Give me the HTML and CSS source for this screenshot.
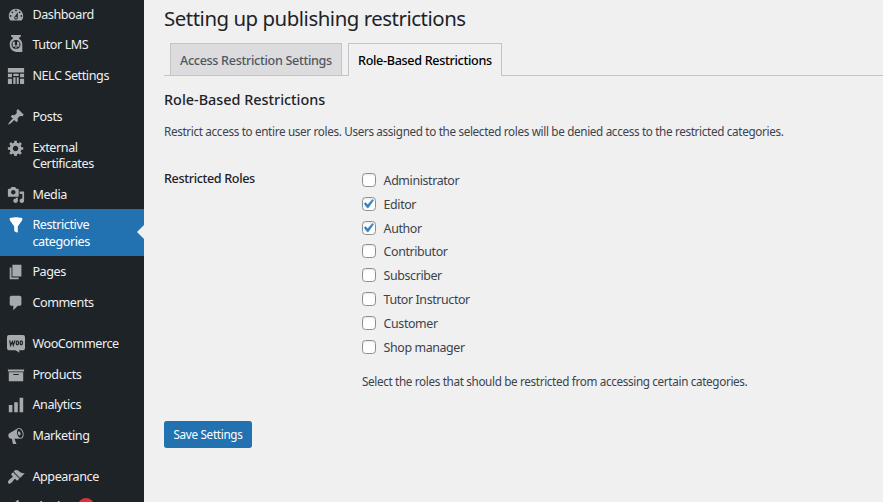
FILE: index.html
```
<!DOCTYPE html>
<html lang="en">
<head>
<meta charset="utf-8">
<title>Setting up publishing restrictions</title>
<link rel="stylesheet" href="styles.css">
</head>
<body>
<nav class="sidebar">
  <ul class="menu">
    <li class="item"><svg viewBox="0 0 20 20"><path d="M3.76 16h12.48c1.1-1.37 1.76-3.11 1.76-5 0-4.42-3.58-8-8-8s-8 3.58-8 8c0 1.89.66 3.63 1.76 5zM10 4c.55 0 1 .45 1 1s-.45 1-1 1-1-.45-1-1 .45-1 1-1zM6 6c.55 0 1 .45 1 1s-.45 1-1 1-1-.45-1-1 .45-1 1-1zm8 0c.55 0 1 .45 1 1s-.45 1-1 1-1-.45-1-1 .45-1 1-1zm-5.37 5.55L12 7v6c0 1.1-.9 2-2 2s-2-.9-2-2c0-.57.24-1.08.63-1.45zM4 10c.55 0 1 .45 1 1s-.45 1-1 1-1-.45-1-1 .45-1 1-1zm12 0c.55 0 1 .45 1 1s-.45 1-1 1-1-.45-1-1 .45-1 1-1zm-5 3c0-.55-.45-1-1-1s-1 .45-1 1 .45 1 1 1 1-.45 1-1z"/></svg><span>Dashboard</span></li>
    <li class="item"><svg class="raised" viewBox="0 0 20 20"><path d="M4.500 0h11v1.500L13.500 3v2h-7V3l-2-1.500z"/><path fill-rule="evenodd" d="M10 3.500c4.500 0 7 3 7 7V19h-4.500C6.500 19 3 15.500 3 10.500s3-7 7-7zm0 2a5 5 0 1 0 0 10 5 5 0 0 0 0-10z"/><path d="M6.300 7.500h2.500v5.500H6.300zM11.200 7.500h2.500v5.500h-2.500zM9.300 11h1.400v4H9.300z"/></svg><span>Tutor LMS</span></li>
    <li class="item"><svg viewBox="0 0 20 20"><path d="M1 1h18v5H1zM1 7.500h4.500v4H1zM1 13h4.500v6H1zM7 7.500h6v2.500H7zM7 11.500h2.500V19H7zM10.800 11.500H13V19h-2.200zM14.500 7.500H19v4h-4.500zM14.500 13H19v6h-4.500z"/></svg><span>NELC Settings</span></li>
    <li class="separator"></li>
    <li class="item"><svg viewBox="0 0 20 20"><path d="M10.44 3.02l1.82-1.82 6.36 6.35-1.83 1.82c-1.05-.68-2.48-.57-3.41.36l-.75.75c-.92.93-1.04 2.35-.35 3.41l-1.83 1.82-2.41-2.41-2.8 2.79c-.42.42-3.38 2.71-3.8 2.29s1.86-3.39 2.28-3.81l2.79-2.79L4.1 9.36l1.83-1.82c1.05.69 2.48.57 3.4-.36l.75-.75c.93-.92 1.05-2.35.36-3.41z"/></svg><span>Posts</span></li>
    <li class="item"><svg viewBox="0 0 20 20"><path d="M18 12h-2.180c-.17.7-.44 1.350-.81 1.930l1.540 1.540-2.100 2.100-1.540-1.540c-.58.36-1.230.63-1.910.79V19H8v-2.180c-.68-.16-1.330-.43-1.910-.79l-1.540 1.540-2.120-2.120 1.540-1.540c-.36-.58-.63-1.230-.79-1.910H1V9.030h2.170c.16-.7.44-1.350.8-1.940L2.430 5.550l2.100-2.100 1.540 1.540c.58-.37 1.240-.64 1.930-.81V2h3v2.180c.68.16 1.330.43 1.910.79l1.540-1.540 2.120 2.120-1.540 1.540c.36.59.64 1.240.8 1.940H18V12zm-8.500 1.500c1.660 0 3-1.340 3-3s-1.340-3-3-3-3 1.340-3 3 1.340 3 3 3z"/></svg><span>External<br>Certificates</span></li>
    <li class="item"><svg viewBox="0 0 20 20"><path d="M13 11V4c0-.55-.45-1-1-1h-1.670L9 1H5L3.670 3H2c-.55 0-1 .45-1 1v7c0 .55.45 1 1 1h10c.55 0 1-.45 1-1zM7 4.500c1.380 0 2.500 1.120 2.500 2.500S8.380 9.500 7 9.500 4.500 8.380 4.500 7 5.620 4.500 7 4.500zM14 6h5v10.500c0 1.380-1.120 2.500-2.500 2.500S14 17.880 14 16.500s1.120-2.500 2.500-2.500c.17 0 .34.02.5.05V9h-3V6zm-4 8.050V13h2v3.500c0 1.380-1.120 2.500-2.500 2.500S7 17.880 7 16.500 8.120 14 9.500 14c.17 0 .34.02.5.05z"/></svg><span>Media</span></li>
    <li class="item current"><svg viewBox="0 0 20 20"><path d="M3 4.500v-2s3.340-1 7-1 7 1 7 1v2l-5 7.030v6.970s-1.220-.09-2.250-.59S8 16.500 8 16.500v-4.970z"/></svg><span>Restrictive<br>categories</span></li>
    <li class="item"><svg viewBox="0 0 20 20"><path d="M6 15V2h10v13H6zm-1 1h8v2H3V5h2v11z"/></svg><span>Pages</span></li>
    <li class="item"><svg viewBox="0 0 20 20"><path d="M5 2h9c1.100 0 2 .9 2 2v7c0 1.100-.9 2-2 2h-2l-5 5v-5H5c-1.100 0-2-.9-2-2V4c0-1.100.9-2 2-2z"/></svg><span>Comments</span></li>
    <li class="separator"></li>
    <li class="item"><svg viewBox="0 0 20 20"><path d="M2.200 0h15.600A2.200 2.200 0 0 1 20 2.200v12.600a2.200 2.200 0 0 1-2.200 2.200h-4.300l.3 2.800L9.500 17H2.200A2.200 2.200 0 0 1 0 14.800V2.200A2.200 2.200 0 0 1 2.200 0z"/><path class="ink" d="M3 6l1 5.500 2-4 1 4L8.800 6"/><ellipse class="ink" cx="11.500" cy="8.700" rx="1.300" ry="2.200"/><ellipse class="ink" cx="15.800" cy="8.700" rx="1.300" ry="2.200"/></svg><span>WooCommerce</span></li>
    <li class="item"><svg viewBox="0 0 20 20"><path d="M19 4v2H1V4h18zM2 7h16v10H2V7zm11 3V9H7v1h6z"/></svg><span>Products</span></li>
    <li class="item"><svg viewBox="0 0 20 20"><path d="M18 18V2h-4v16h4zm-6 0V7H8v11h4zm-6 0v-8H2v8h4z"/></svg><span>Analytics</span></li>
    <li class="item"><svg viewBox="0 0 20 20"><path d="M18.150 5.940c.46 1.620.38 3.220-.02 4.480-.42 1.280-1.260 2.180-2.300 2.480-.16.06-.26.06-.4.06-.06.02-.12.02-.18.02-.06.02-.14.02-.22.02h-6.800l2.220 5.500c.02.14-.06.26-.14.34-.08.1-.24.16-.34.16H6.950c-.1 0-.26-.06-.34-.16-.08-.08-.16-.2-.14-.34l-1-5.500H4.250l-.02-.02c-.5.06-1.080-.18-1.540-.62s-.88-1.080-1.060-1.880c-.24-.8-.2-1.560-.02-2.200.18-.62.58-1.080 1.060-1.300l.02-.02 9-5.400c.1-.06.18-.1.24-.16.06-.04.14-.08.24-.12.16-.08.28-.12.5-.18 1.040-.3 2.240.1 3.220.98s1.840 2.240 2.260 3.860zm-2.580 5.980h-.02c.4-.1.74-.34 1.040-.7.58-.7.86-1.760.86-3.040 0-.64-.1-1.300-.28-1.980-.34-1.360-1.020-2.500-1.780-3.240s-1.680-1.100-2.460-.88c-.82.22-1.400.96-1.700 2-.32 1.040-.28 2.360.06 3.720.38 1.360 1 2.500 1.800 3.240.78.74 1.620 1.100 2.480.88zm-2.540-7.080c.22-.04.42-.02.62.04.38.16.76.48 1.020 1s.42 1.200.42 1.780c0 .3-.04.56-.12.8-.18.48-.44.84-.86.94-.34.1-.8-.06-1.140-.4s-.64-.86-.78-1.500c-.18-.62-.12-1.240.02-1.720s.48-.84.82-.94z"/></svg><span>Marketing</span></li>
    <li class="separator"></li>
    <li class="item"><svg viewBox="0 0 20 20"><path d="M14.480 11.060L7.410 3.990l1.500-1.500c.5-.56 2.300-.47 3.510.32 1.210.8 1.430 1.280 2.910 2.100 1.180.64 2.450 1.260 4.450.85zm-.71.71L6.700 4.700 4.930 6.470c-.39.39-.39 1.020 0 1.410l1.060 1.060c.39.39.39 1.030 0 1.420-.6.6-1.430 1.110-2.210 1.690-.35.26-.7.53-1.010.84C1.430 14.230.4 16.080 1.400 17.070c.99 1 2.840-.03 4.180-1.360.31-.31.58-.66.85-1.020.57-.78 1.080-1.610 1.690-2.210.39-.39 1.020-.39 1.410 0l1.060 1.060c.39.39 1.020.39 1.410 0z"/></svg><span>Appearance</span></li>
    <li class="item"><svg viewBox="0 0 20 20"><path d="M13.110 4.360L9.870 7.600 8 5.730l3.240-3.240c.35-.34 1.050-.2 1.560.32.52.51.66 1.210.31 1.550zm-8 1.770l.91-1.120 9.010 9.010-1.190.84c-.71.71-2.630 1.160-3.820 1.160H6.140L4.900 17.260c-.59.59-1.540.59-2.120 0-.59-.58-.59-1.530 0-2.120L4 13.900v-3.880c0-1.190.4-3.180 1.110-3.890z"/></svg><span>Plugins</span><b class="count"></b></li>
  </ul>
</nav>
<main class="content">
  <h1>Setting up publishing restrictions</h1>
  <div class="tabs">
    <a class="tab">Access Restriction Settings</a>
    <a class="tab active">Role-Based Restrictions</a>
  </div>
  <h2>Role-Based Restrictions</h2>
  <p class="intro">Restrict access to entire user roles. Users assigned to the selected roles will be denied access to the restricted categories.</p>
  <div class="field">
    <div class="field-name">Restricted Roles</div>
    <div class="field-body">
      <label><i class="box"></i><span>Administrator</span></label>
      <label><i class="box"><svg viewBox="0 0 20 20"><path d="M14.830 4.890l1.340.94-5.810 8.380H9.020L5.780 9.670l1.340-1.250 2.570 2.400z"/></svg></i><span>Editor</span></label>
      <label><i class="box"><svg viewBox="0 0 20 20"><path d="M14.830 4.890l1.340.94-5.810 8.380H9.020L5.780 9.670l1.340-1.250 2.570 2.400z"/></svg></i><span>Author</span></label>
      <label><i class="box"></i><span>Contributor</span></label>
      <label><i class="box"></i><span>Subscriber</span></label>
      <label><i class="box"></i><span>Tutor Instructor</span></label>
      <label><i class="box"></i><span>Customer</span></label>
      <label><i class="box"></i><span>Shop manager</span></label>
      <p class="hint">Select the roles that should be restricted from accessing certain categories.</p>
    </div>
  </div>
  <button class="save">Save Settings</button>
</main>
</body>
</html>
```
FILE: styles.css
```
* { box-sizing: border-box; }
body {
  margin: 0;
  height: 502px;
  overflow: hidden;
  display: flex;
  background: #f0f0f1;
  color: #3c434a;
  font: 11.7px/18px "Noto Sans", "Open Sans", sans-serif;
}
.sidebar { width: 144px; height: 502px; overflow: hidden; flex: none; background: #1d2327; }
.menu { list-style: none; margin: -1.3px 0 0; padding: 0; }
.item {
  position: relative;
  display: flex;
  align-items: flex-start;
  min-height: 30.7px;
  padding: 8px 0 6.3px 7px;
  color: #f0f0f1;
  font-size: 12.6px;
  line-height: 16.4px;
  letter-spacing: -0.42px;
}
.item svg { width: 18px; height: 18px; margin: -1px 7.4px -2px 0; flex: none; fill: #a7aaad; }
.item .raised { margin: -2px 7.4px -1px 0; }
.item .ink { fill: none; stroke: #1d2327; stroke-width: 1.4; }
.separator { height: 10px; }
.current { background: #2271b1; color: #fff; }
.current svg { fill: #fff; }
.current::after {
  content: "";
  position: absolute;
  right: 0;
  top: 16px;
  border: 7.2px solid transparent;
  border-left: 0;
  border-right-color: #f0f0f1;
}
.count { width: 16px; height: 16px; margin: -1px 0 0 5px; border-radius: 8px; background: #d63638; }
.content { flex: 1; padding: 6px 0 0 20px; }
h1 { margin: 0; font-size: 20.4px; line-height: 24px; font-weight: 400; color: #1d2327; letter-spacing: -0.46px; }
.tabs { display: flex; gap: 6px; height: 46px; padding: 13px 0 0 6px; border-bottom: 1px solid #c3c4c7; }
.tab {
  width: 172px;
  height: 32px;
  padding: 5px 0 0 9px;
  border: 1px solid #c3c4c7;
  border-bottom: 0;
  background: #dcdcde;
  color: #50575e;
  font-size: 12.6px;
  line-height: 24px;
  font-weight: 500;
  letter-spacing: -0.32px;
  white-space: nowrap;
}
.active { width: 154px; height: 33px; background: #f0f0f1; color: #000; }
h2 { margin: 15px 0 0; font-size: 14.4px; line-height: 18px; font-weight: 500; color: #1d2327; letter-spacing: 0; }
.intro { margin: 13px 0 0; letter-spacing: -0.335px; white-space: nowrap; }
.field { display: flex; margin-top: 29px; }
.field-name { width: 198px; color: #1d2327; font-size: 12.6px; font-weight: 500; letter-spacing: -0.36px; line-height: 20px; }
.field-body label { display: flex; align-items: center; height: 23.85px; font-size: 12.4px; letter-spacing: -0.38px; }
.box {
  width: 14px;
  height: 14px;
  margin: -2px 7.6px 0 0;
  border: 1px solid #8c8f94;
  border-radius: 3.6px;
  background: #fff;
  box-shadow: inset 0 1px 2px rgba(0, 0, 0, .1);
}
.box svg { display: block; width: 18px; height: 18px; margin: -3px 0 0 -4px; fill: #3582c4; stroke: #3582c4; stroke-width: .6; }
.hint { margin: 12.7px 0 0; letter-spacing: -0.34px; }
.save {
  display: block;
  width: 88px;
  height: 27px;
  margin-top: 30.6px;
  padding: 0;
  border: 0;
  border-radius: 2.7px;
  background: #2271b1;
  color: #fff;
  font: 11.7px/25px "Noto Sans", "Open Sans", sans-serif;
  letter-spacing: -0.3px;
}
```
